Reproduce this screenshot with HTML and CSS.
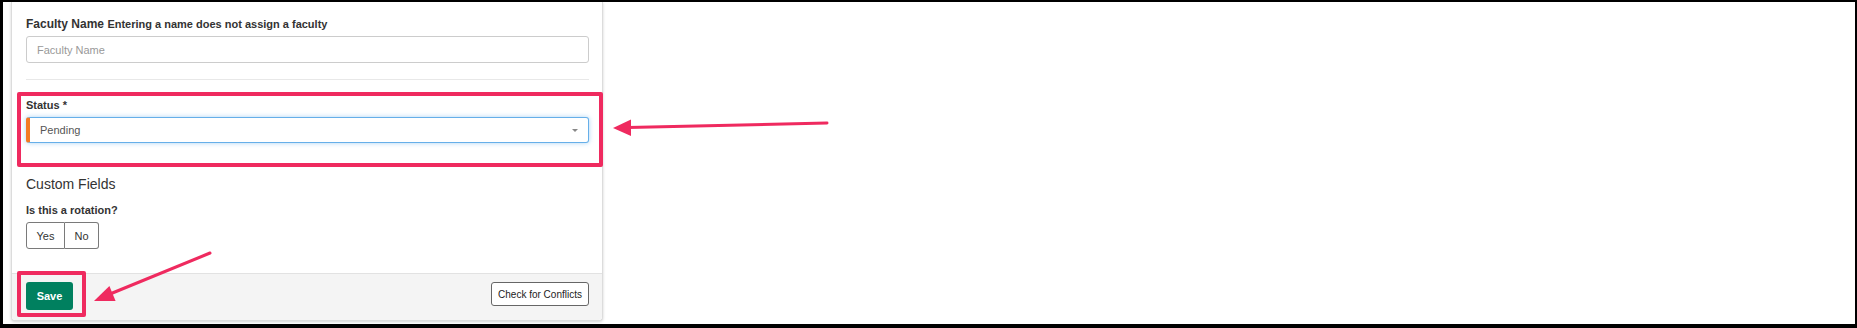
FILE: index.html
```html
<!DOCTYPE html>
<html lang="en">
<head>
    <meta charset="UTF-8">
    <meta name="viewport" content="width=device-width, initial-scale=1.0">
    <title>Rotation Schedule - Edit</title>
    <link rel="stylesheet" href="styles.css">
</head>
<body>
    <div class="frame">
        <div class="card">
            <div class="card-body">
                <div class="form-group">
                    <label class="field-label name-label" for="faculty">Faculty Name <span class="help-text">Entering a name does not assign a faculty</span></label>
                    <input type="text" id="faculty" class="form-control" placeholder="Faculty Name">
                </div>
                <hr class="divider">

                <div class="form-group status-group">
                    <label class="field-label" for="status">Status *</label>
                    <div class="select-wrap">
                        <select id="status" class="form-control form-select required">
                            <option>Pending</option>
                            <option>Confirmed</option>
                            <option>Cancelled</option>
                        </select>
                    </div>
                </div>

                <h3 class="section-title">Custom Fields</h3>
                <div class="form-group">
                    <label class="field-label">Is this a rotation?</label>
                    <div class="btn-group">
                        <button type="button" class="btn-toggle">Yes</button>
                        <button type="button" class="btn-toggle">No</button>
                    </div>
                </div>
            </div>
            <div class="card-footer">
                <button type="button" class="btn-save">Save</button>
                <button type="button" class="btn-outline">Check for Conflicts</button>
            </div>
        </div>

        <!-- annotation layer -->
        <div class="callout callout-status"></div>
        <div class="callout callout-save"></div>
        <svg class="arrows" width="1857" height="328" viewBox="0 0 1857 328">
            <line x1="827" y1="123" x2="628" y2="127.5" />
            <polygon points="613,128 631,119.5 631,136" />
            <line x1="210" y1="253" x2="110" y2="294" />
            <polygon points="94,301 115.6,301 109.4,286" />
        </svg>
    </div>
</body>
</html>
```

FILE: styles.css
```css
html, body {
    margin: 0;
    padding: 0;
    background-color: #ffffff;
}
body {
    font-family: "Liberation Sans", Arial, sans-serif;
    color: #333333;
    font-size: 11px;
}
.frame {
    position: relative;
    width: 1857px;
    height: 328px;
    box-sizing: border-box;
    border-style: solid;
    border-color: #000000;
    border-width: 2px 2px 4px 3px;
    overflow: hidden;
    padding-left: 8px;
}
.card {
    width: 592px;
    box-sizing: border-box;
    border: 1px solid #dcdcdc;
    border-top: none;
    border-radius: 0 0 4px 4px;
    box-shadow: 0 1px 3px rgba(0, 0, 0, 0.18);
    background-color: #ffffff;
}
.card-body {
    padding: 15px 13px 24px 14px;
}
.form-group {
    display: flex;
    flex-direction: column;
}
.field-label {
    font-weight: bold;
    font-size: 11px;
    line-height: 14px;
    margin-bottom: 5px;
    color: #333333;
}
.name-label {
    font-size: 12px;
}
.help-text {
    font-size: 11px;
    font-weight: bold;
    color: #333333;
}
.form-control {
    box-sizing: border-box;
    width: 100%;
    height: 27px;
    padding: 0 10px;
    font-family: "Liberation Sans", Arial, sans-serif;
    font-size: 11px;
    color: #555555;
    border: 1px solid #cccccc;
    border-radius: 3px;
    background-color: #ffffff;
    outline: none;
}
.form-control::placeholder {
    color: #999999;
}
.divider {
    border: none;
    border-top: 1px solid #e8e8e8;
    margin: 16px 0 0;
}
.status-group {
    margin-top: 18px;
}
.select-wrap {
    position: relative;
}
.select-wrap::after {
    content: "";
    position: absolute;
    right: 11px;
    top: 12px;
    border-left: 3px solid transparent;
    border-right: 3px solid transparent;
    border-top: 3px solid #888888;
}
.form-select {
    appearance: none;
    -webkit-appearance: none;
    height: 26px;
    padding-left: 10px;
    border-color: #66afe9;
    box-shadow: 0 0 5px rgba(102, 175, 233, 0.55);
}
.form-select.required {
    border-left: 4px solid #f37a22;
}
.section-title {
    font-size: 14px;
    font-weight: normal;
    line-height: 18px;
    margin: 32px 0 10px;
    color: #333333;
}
.btn-group {
    display: flex;
}
.btn-toggle {
    height: 27px;
    padding: 0;
    font-family: "Liberation Sans", Arial, sans-serif;
    font-size: 11px;
    color: #333333;
    background-color: #ffffff;
    border: 1px solid #7a7a7a;
    border-radius: 3px 0 0 3px;
    width: 39px;
}
.btn-toggle + .btn-toggle {
    width: 34px;
    border-left: none;
    border-radius: 0 3px 3px 0;
}
.card-footer {
    display: flex;
    justify-content: space-between;
    align-items: flex-start;
    background-color: #f4f4f4;
    border-top: 1px solid #e2e2e2;
    padding: 8px 13px 10px 14px;
    border-radius: 0 0 4px 4px;
}
.btn-save {
    width: 47px;
    height: 28px;
    padding: 0;
    font-family: "Liberation Sans", Arial, sans-serif;
    font-size: 11px;
    font-weight: bold;
    color: #ffffff;
    background-color: #00805f;
    border: none;
    border-radius: 3px;
}
.btn-outline {
    width: 98px;
    height: 24px;
    padding: 0;
    font-family: "Liberation Sans", Arial, sans-serif;
    font-size: 10px;
    color: #222222;
    background-color: #ffffff;
    border: 1px solid #666666;
    border-radius: 3px;
}
.callout {
    position: absolute;
    box-sizing: border-box;
    border: 4px solid #ef2a5f;
    border-radius: 2px;
}
.callout-status {
    left: 14px;
    top: 90px;
    width: 586px;
    height: 75px;
}
.callout-save {
    left: 14px;
    top: 269px;
    width: 69px;
    height: 46px;
}
.arrows {
    position: absolute;
    left: -3px;
    top: -2px;
    pointer-events: none;
}
.arrows line {
    stroke: #ef2a5f;
    stroke-width: 3;
    stroke-linecap: round;
}
.arrows polygon {
    fill: #ef2a5f;
}
```
